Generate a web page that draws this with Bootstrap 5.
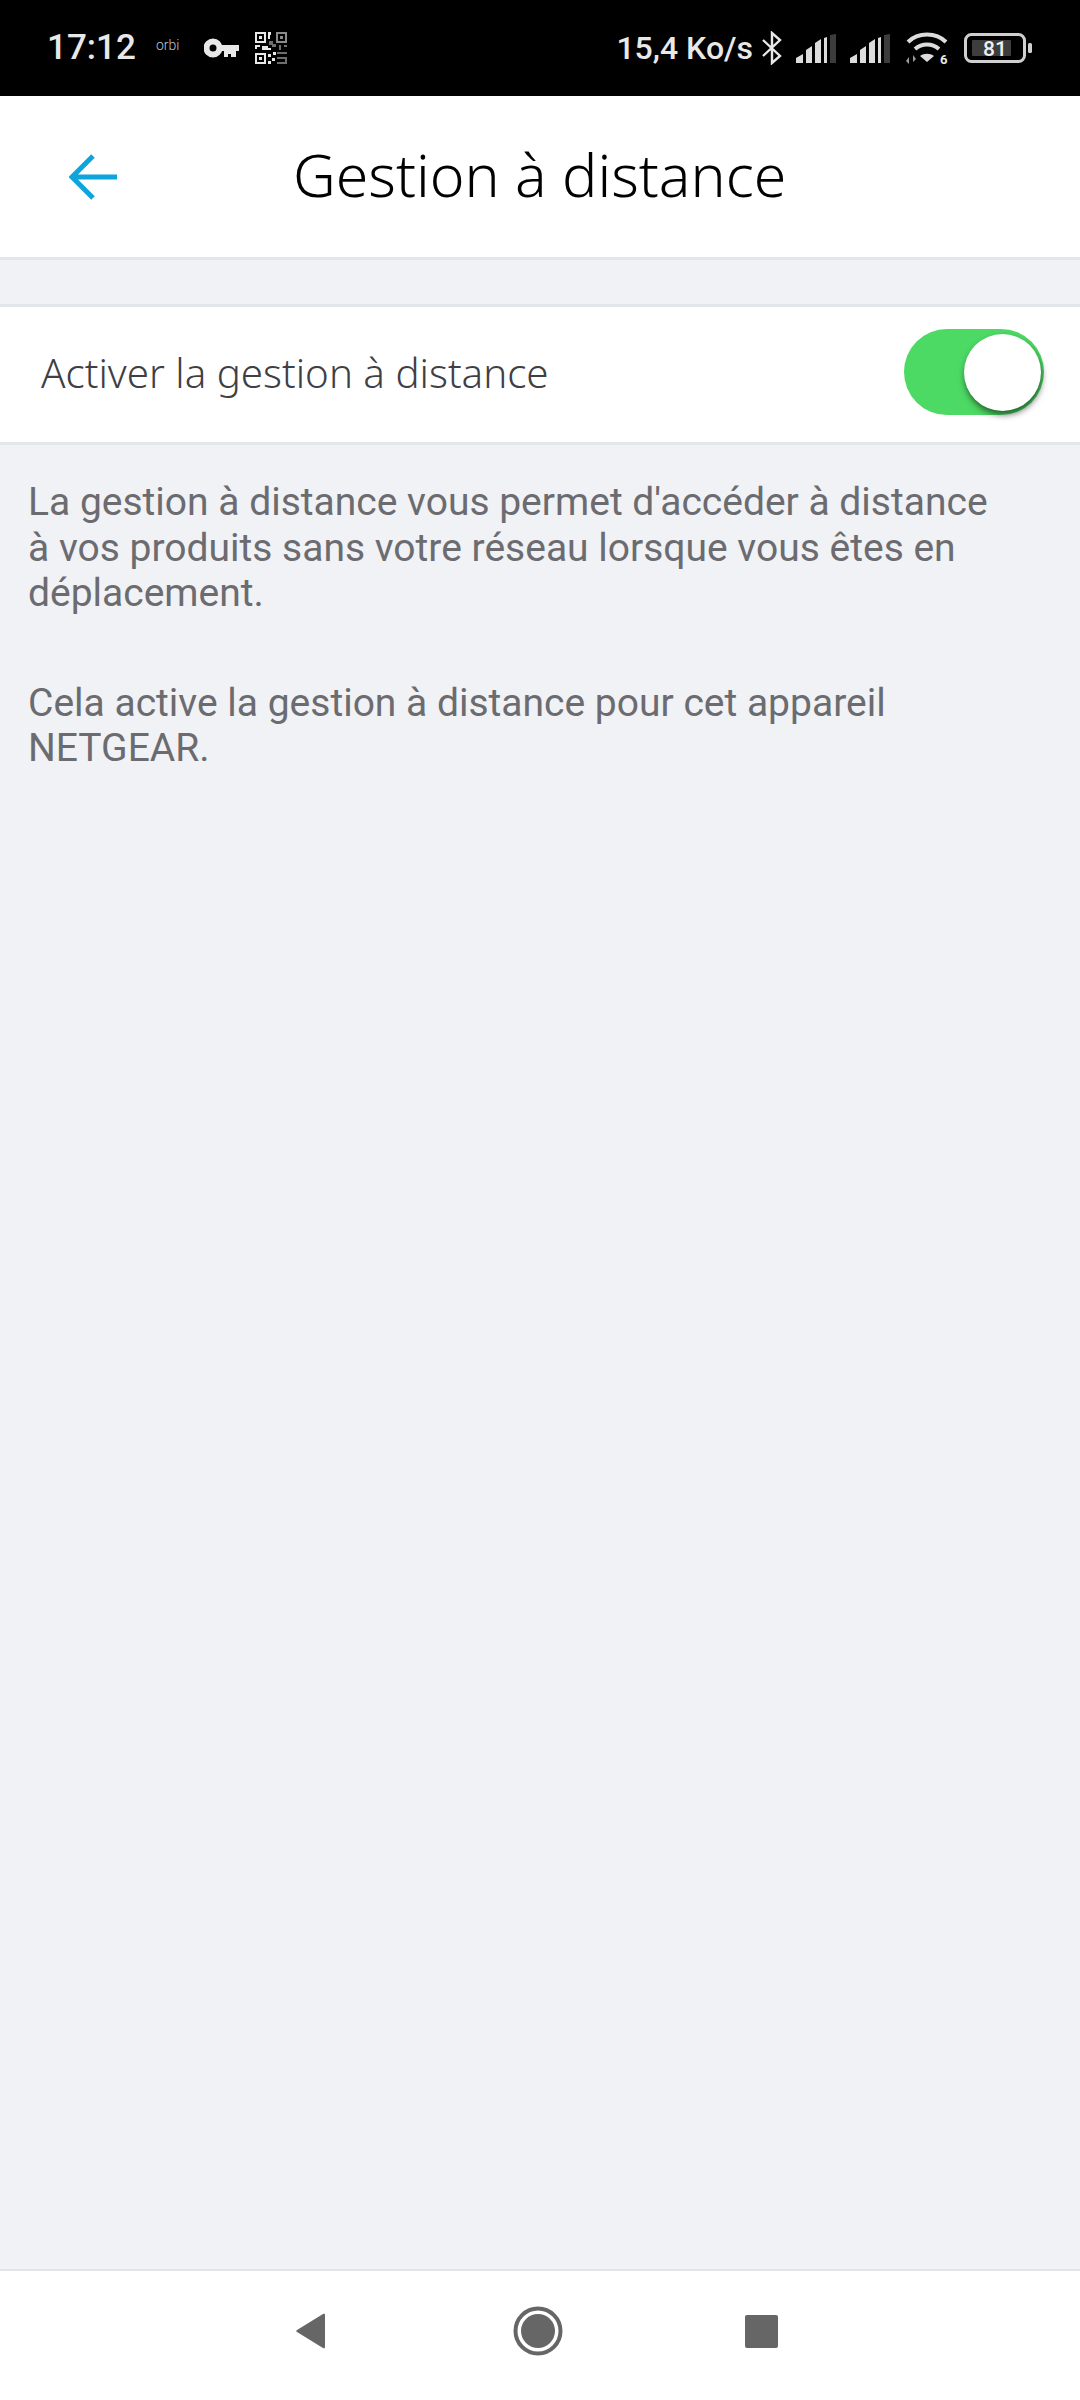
<!DOCTYPE html>
<html lang="fr">
<head>
<meta charset="utf-8">
<title>Gestion à distance</title>
<link href="https://cdn.jsdelivr.net/npm/bootstrap@5.3.0/dist/css/bootstrap.min.css" rel="stylesheet">
<style>
body { width: 1080px; height: 2400px; background: #f0f2f6; font-family: "Noto Sans", "Open Sans", sans-serif; }
.stat-bar { height: 96px; background: #000; color: #e8e8e8; font-family: Roboto, sans-serif; font-weight: 500; padding: 0 46px 0 47px; }
.stat-bar > * { flex-shrink: 0; }
.stat-time { font-size: 35px; line-height: 1.2; width: 92px; white-space: nowrap; }
.stat-orbi { font-size: 14px; font-weight: 300; color: #b9c4cc; line-height: 1.2; margin-left: 17px; margin-top: -6px; width: 30px; }
.stat-key { margin-left: 18px; }
.stat-qr { margin-left: 15px; }
.stat-rate { font-size: 32px; line-height: 1.4; white-space: nowrap; margin-left: auto; }
.app-head { height: 164px; background: #fff; border-bottom: 3px solid #e3e7eb; padding-left: 69px; }
.app-title { font-size: 59px; font-weight: 300; color: #000; margin: -4px 0 0 176px; line-height: 1.2; white-space: nowrap; }
.gap-band { height: 47px; border-bottom: 3px solid #e3e7eb; }
.set-row { height: 138px; background: #fff; border-bottom: 3px solid #e3e7eb; padding: 0 36px 0 41px; }
.set-label { font-size: 40.3px; font-weight: 300; color: #3f3f45; line-height: 1.3; white-space: nowrap; margin-top: -3px; }
.tgl { width: 140px; height: 86px; border-radius: 43px; background: #4cd964; padding: 5px 3px; margin-bottom: 6px; }
.tgl-knob { width: 77px; height: 77px; border-radius: 50%; background: #fff; box-shadow: 1px 4px 6px rgba(0,0,0,.55); }
.help-text { padding: 35px 28px 0; font-family: Roboto, sans-serif; font-size: 39px; line-height: 45.6px; color: #6b6b70; }
.help-text p { margin: 0 0 64px; }
.sys-nav { height: 131px; background: #fff; border-top: 2px solid #e4e4e6; padding: 0 0 9px 294px; }
.page-fill { flex: 1 1 auto; min-height: 0; }
</style>
</head>
<body class="d-flex flex-column">
<div class="stat-bar d-flex align-items-center flex-shrink-0">
  <span class="stat-time">17:12</span>
  <span class="stat-orbi">orbi</span>
  <svg class="stat-key" width="36" height="20" viewBox="0 0 36 20"><circle cx="9" cy="10" r="6.5" fill="none" stroke="#e8e8e8" stroke-width="6"/><path d="M15 7h20v6h-3v6h-5v-3h-3v3h-4v-6h-5z" fill="#e8e8e8"/></svg>
  <svg class="stat-qr" width="32" height="32" viewBox="0 0 32 32" fill="#e8e8e8">
    <path d="M0 0h11v11H0zM2 2v7h7V2z" fill-rule="evenodd"/><rect x="4" y="4" width="3" height="3"/>
    <path d="M0 21h11v11H0zM2 23v7h7v-7z" fill-rule="evenodd"/><rect x="4" y="25" width="3" height="3"/>
    <path fill="#8a8a8a" fill-rule="evenodd" d="M21 0h11v11H21zM23 2v7h7V2z"/><rect fill="#8a8a8a" x="25" y="4" width="3" height="3"/>
    <path d="M13 0h3v3h-1v4h-2zM0 13h5v2H2v2H0zM7 14h6v2h3v2h-9zM13 22h3v3h-3zM17 26h3v3h-3zM13 29h3v3h-3zM18 20h3v3h-3z"/>
    <path fill="#6e6e6e" d="M14 9h4v3h3v3h-4v-2h-3zM24 13h2v5h-2zM29 13h3v2h-3zM22 20h10v2H22zM22 25h10v7H22v-2h8v-3h-8z"/>
  </svg>
  <span class="stat-rate">15,4 Ko/s</span>
  <svg class="ms-2" width="22" height="34" viewBox="0 0 22 34"><path d="M2 9l17 16-8 7V2l8 7L2 25" fill="none" stroke="#e8e8e8" stroke-width="2.4"/></svg>
  <svg style="margin-left:13px" width="40" height="29" viewBox="0 0 40 29" fill="#dcdcdc"><path d="M0 29v-5l7-4v9zM10 29V16l6-4v17zM19 29V9l6-4v24zM28 29V4l3-1v26z"/><path fill="#3c3c3c" d="M34 29V1l6-1v29z"/></svg>
  <svg style="margin-left:14px" width="40" height="29" viewBox="0 0 40 29" fill="#dcdcdc"><path d="M0 29v-5l7-4v9zM10 29V16l6-4v17zM19 29V9l6-4v24zM28 29V4l3-1v26z"/><path fill="#3c3c3c" d="M34 29V1l6-1v29z"/></svg>
  <svg style="margin-left:16px" width="44" height="34" viewBox="0 0 44 34"><g fill="none" stroke="#dcdcdc" stroke-width="4"><path d="M2 11C12 1 30 1 40 11"/><path d="M9 18c7-6 17-6 24 0"/></g><path d="M14 25c4-3 10-3 14 0l-7 6z" fill="#dcdcdc"/><path d="M3 26v7l-3-3zM7 24v7l3-3z" fill="#9a9a9a"/><text x="34" y="33" font-family="Roboto, sans-serif" font-size="13" font-weight="700" fill="#e8e8e8">6</text></svg>
  <svg style="margin-left:14px" width="70" height="30" viewBox="0 0 70 30"><rect x="1.5" y="1.5" width="59" height="27" rx="6" fill="none" stroke="#cfcfcf" stroke-width="3"/><rect x="8" y="7" width="39" height="16" rx="1" fill="#3d3d3d"/><rect x="64" y="10" width="4" height="10" rx="1.5" fill="#cfcfcf"/><text x="31" y="23" text-anchor="middle" font-family="Roboto, sans-serif" font-size="21" font-weight="500" fill="#f0f0f0">81</text></svg>
</div>

<header class="app-head d-flex align-items-center flex-shrink-0">
  <svg width="48" height="46" viewBox="0 0 48 46"><path d="M24 2L3 23l21 21M3 23h45" fill="none" stroke="#0ea5dd" stroke-width="5"/></svg>
  <h1 class="app-title">Gestion à distance</h1>
</header>

<div class="gap-band flex-shrink-0"></div>

<div class="set-row d-flex align-items-center justify-content-between flex-shrink-0">
  <span class="set-label">Activer la gestion à distance</span>
  <div class="tgl d-flex justify-content-end" role="switch" aria-checked="true"><div class="tgl-knob"></div></div>
</div>

<div class="help-text page-fill">
  <p>La gestion à distance vous permet d'accéder à distance<br>à vos produits sans votre réseau lorsque vous êtes en<br>déplacement.</p>
  <p>Cela active la gestion à distance pour cet appareil<br>NETGEAR.</p>
</div>

<nav class="sys-nav d-flex align-items-center flex-shrink-0">
  <svg width="32" height="38" viewBox="0 0 32 38"><path d="M29 2L3 18c-1 .6-1 1.4 0 2l26 16c1.200.7 2 .2 2-1V3c0-1.200-.8-1.700-2-1z" fill="#666"/></svg>
  <svg style="margin-left:187px" width="50" height="50" viewBox="0 0 50 50"><circle cx="25" cy="25" r="22.500" fill="none" stroke="#666" stroke-width="4"/><circle cx="25" cy="25" r="17" fill="#666"/></svg>
  <svg style="margin-left:182px" width="33" height="33" viewBox="0 0 33 33"><rect width="33" height="33" rx="2" fill="#666"/></svg>
</nav>
</body>
</html>
